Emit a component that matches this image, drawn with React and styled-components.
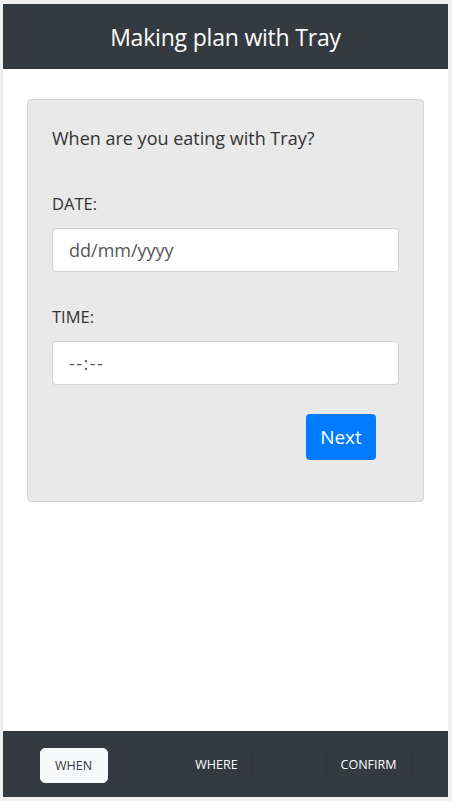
import React from "react";
import styled, { createGlobalStyle } from "styled-components";

const Global = createGlobalStyle`
  html, body { margin: 0; padding: 0; background: #f0f0f0; }
  body { font-family: "Open Sans", "Liberation Sans", sans-serif; }
  * { box-sizing: border-box; }
`;

const Frame = styled.div`
  margin: 4px 4px 4px 3px;
  height: 793px;
  display: flex;
  flex-direction: column;
  background: #fff;
`;

const Header = styled.header`
  height: 65px;
  background: #343a40;
  color: #fff;
  display: flex;
  align-items: center;
  justify-content: center;
  font-size: 23px;
  font-weight: 400;
  letter-spacing: -0.2px;
`;

const Main = styled.main`
  flex: 1;
  padding: 30px 24px;
`;

const Card = styled.section`
  height: 403px;
  background: #e9e9e9;
  border: 1px solid #d6d6d6;
  border-radius: 4px;
  padding: 23px 24px;
  display: flex;
  flex-direction: column;
`;

const Question = styled.p`
  margin: 0 0 39px;
  font-size: 18px;
  line-height: 30px;
  color: #333;
`;

const Label = styled.label`
  display: block;
  font-size: 16.5px;
  line-height: 24px;
  color: #333;
  margin-bottom: 12px;
`;

const Field = styled.div`
  height: 44px;
  background: #fff;
  border: 1px solid #ced4da;
  border-radius: 4px;
  display: flex;
  align-items: center;
  padding: 0 16px;
  font-size: 18px;
  color: #555;
  letter-spacing: ${(p) => p.$spacing || 0}px;
  margin-bottom: ${(p) => p.$gap || 0}px;
`;

const Actions = styled.div`
  display: flex;
  justify-content: flex-end;
  padding-right: 23px;
  margin-top: 29px;
`;

const NextButton = styled.button`
  width: 70px;
  height: 46px;
  border: none;
  border-radius: 4px;
  background: #007bff;
  color: #fff;
  font-family: inherit;
  font-size: 19px;
  cursor: pointer;
`;

const Footer = styled.footer`
  height: 66px;
  background: #343a40;
  display: flex;
  align-items: center;
  justify-content: space-around;
`;

const Tab = styled.button`
  height: ${(p) => (p.$active ? 35 : 33)}px;
  width: ${(p) => p.$w}px;
  border-radius: 5px;
  border: 1px solid ${(p) => (p.$active ? "#f8f9fa" : "#30363c")};
  background: ${(p) => (p.$active ? "#f8f9fa" : "#343a40")};
  color: ${(p) => (p.$active ? "#343a40" : "#fff")};
  font-family: inherit;
  font-size: 12.5px;
  font-weight: ${(p) => (p.$active ? 400 : 500)};
  padding: 0;
  margin-top: ${(p) => (p.$active ? 2 : 0)}px;
`;

export default function App() {
  return (
    <>
      <Global />
      <Frame>
        <Header>Making plan with Tray</Header>
        <Main>
          <Card>
            <Question>When are you eating with Tray?</Question>
            <Label>DATE:</Label>
            <Field $gap={33}>dd/mm/yyyy</Field>
            <Label>TIME:</Label>
            <Field $spacing={1.5}>--:--</Field>
            <Actions>
              <NextButton>Next</NextButton>
            </Actions>
          </Card>
        </Main>
        <Footer>
          <Tab $active $w={68}>WHEN</Tab>
          <Tab $w={72}>WHERE</Tab>
          <Tab $w={86}>CONFIRM</Tab>
        </Footer>
      </Frame>
    </>
  );
}
